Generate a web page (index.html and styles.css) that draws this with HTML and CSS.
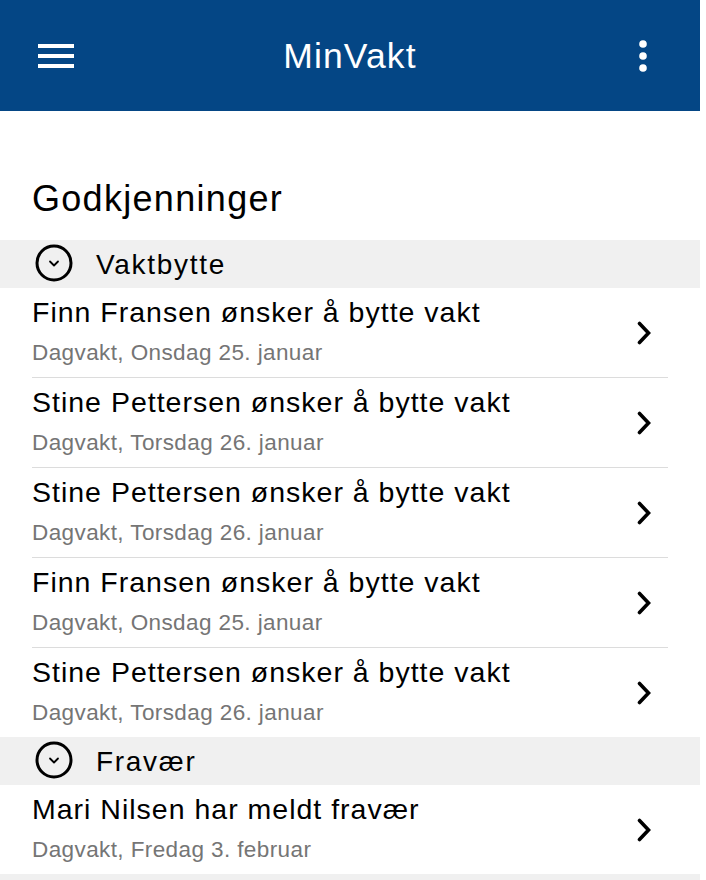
FILE: index.html
```html
<!DOCTYPE html>
<html lang="no">
<head>
<meta charset="utf-8">
<title>MinVakt</title>
<link rel="stylesheet" href="styles.css">
</head>
<body>
<div class="app">
  <header class="topbar">
    <div class="topbar-left">
      <span class="hamburger"><span></span><span></span><span></span></span>
    </div>
    <h1 class="brand">MinVakt</h1>
    <div class="topbar-right">
      <svg class="kebab" width="10" height="32" viewBox="0 0 10 32"><circle cx="5" cy="4" r="3.8" fill="#fff"/><circle cx="5" cy="16" r="3.8" fill="#fff"/><circle cx="5" cy="28" r="3.8" fill="#fff"/></svg>
    </div>
  </header>

  <h2 class="page-title">Godkjenninger</h2>

  <section class="group">
    <div class="group-head">
      <svg class="toggle" width="38" height="38" viewBox="0 0 38 38"><circle cx="19" cy="19" r="17" fill="none" stroke="#000" stroke-width="3"/><polyline points="15,17.5 19,21.5 23,17.5" fill="none" stroke="#000" stroke-width="1.8" stroke-linecap="round" stroke-linejoin="round"/></svg>
      <span class="group-title">Vaktbytte</span>
    </div>
    <ul class="items">
      <li class="item"><div class="item-text"><div class="item-main">Finn Fransen ønsker å bytte vakt</div><div class="item-sub">Dagvakt, Onsdag 25. januar</div></div><svg class="chev" width="14" height="24" viewBox="0 0 14 24"><polyline points="2.5,2.5 11.5,12 2.5,21.5" fill="none" stroke="#000" stroke-width="3.6" stroke-linecap="round" stroke-linejoin="miter"/></svg></li>
      <li class="item"><div class="item-text"><div class="item-main">Stine Pettersen ønsker å bytte vakt</div><div class="item-sub">Dagvakt, Torsdag 26. januar</div></div><svg class="chev" width="14" height="24" viewBox="0 0 14 24"><polyline points="2.5,2.5 11.5,12 2.5,21.5" fill="none" stroke="#000" stroke-width="3.6" stroke-linecap="round" stroke-linejoin="miter"/></svg></li>
      <li class="item"><div class="item-text"><div class="item-main">Stine Pettersen ønsker å bytte vakt</div><div class="item-sub">Dagvakt, Torsdag 26. januar</div></div><svg class="chev" width="14" height="24" viewBox="0 0 14 24"><polyline points="2.5,2.5 11.5,12 2.5,21.5" fill="none" stroke="#000" stroke-width="3.6" stroke-linecap="round" stroke-linejoin="miter"/></svg></li>
      <li class="item"><div class="item-text"><div class="item-main">Finn Fransen ønsker å bytte vakt</div><div class="item-sub">Dagvakt, Onsdag 25. januar</div></div><svg class="chev" width="14" height="24" viewBox="0 0 14 24"><polyline points="2.5,2.5 11.5,12 2.5,21.5" fill="none" stroke="#000" stroke-width="3.6" stroke-linecap="round" stroke-linejoin="miter"/></svg></li>
      <li class="item"><div class="item-text"><div class="item-main">Stine Pettersen ønsker å bytte vakt</div><div class="item-sub">Dagvakt, Torsdag 26. januar</div></div><svg class="chev" width="14" height="24" viewBox="0 0 14 24"><polyline points="2.5,2.5 11.5,12 2.5,21.5" fill="none" stroke="#000" stroke-width="3.6" stroke-linecap="round" stroke-linejoin="miter"/></svg></li>
    </ul>
  </section>

  <section class="group">
    <div class="group-head">
      <svg class="toggle" width="38" height="38" viewBox="0 0 38 38"><circle cx="19" cy="19" r="17" fill="none" stroke="#000" stroke-width="3"/><polyline points="15,17.5 19,21.5 23,17.5" fill="none" stroke="#000" stroke-width="1.8" stroke-linecap="round" stroke-linejoin="round"/></svg>
      <span class="group-title">Fravær</span>
    </div>
    <ul class="items">
      <li class="item"><div class="item-text"><div class="item-main">Mari Nilsen har meldt fravær</div><div class="item-sub">Dagvakt, Fredag 3. februar</div></div><svg class="chev" width="14" height="24" viewBox="0 0 14 24"><polyline points="2.5,2.5 11.5,12 2.5,21.5" fill="none" stroke="#000" stroke-width="3.6" stroke-linecap="round" stroke-linejoin="miter"/></svg></li>
    </ul>
  </section>

  <section class="group">
    <div class="group-head"></div>
  </section>
</div>
</body>
</html>
```

FILE: styles.css
```css
* { box-sizing: border-box; }

html, body {
  margin: 0;
  padding: 0;
  background: #fff;
}

body {
  font-family: "Liberation Sans", Arial, Helvetica, sans-serif;
  color: #000;
}

.app {
  width: 700px;
  background: #fff;
}

.topbar {
  height: 111px;
  background: #044685;
  display: grid;
  grid-template-columns: 1fr auto 1fr;
  align-items: center;
  padding: 0 38px;
}

.topbar-left { display: flex; align-items: center; }
.topbar-right {
  display: flex;
  justify-content: flex-end;
  align-items: center;
  padding-right: 14px;
}

.hamburger {
  display: flex;
  flex-direction: column;
  gap: 6px;
  width: 36px;
}
.hamburger span {
  display: block;
  height: 4px;
  background: #fff;
}

.kebab { display: block; }

.brand {
  margin: 0;
  color: #fff;
  font-weight: normal;
  font-size: 35.5px;
  letter-spacing: 1.1px;
  line-height: 40px;
}

.page-title {
  margin: 0 0 19px;
  padding: 66px 0 0 32px;
  font-weight: normal;
  font-size: 36px;
  line-height: 44px;
  letter-spacing: 1.3px;
}

.group-head {
  height: 48px;
  background: #f0f0f0;
  display: flex;
  align-items: center;
  padding-left: 35px;
  gap: 23px;
}

.toggle { display: block; margin-top: -3px; }

.group-title {
  font-size: 28px;
  letter-spacing: 1.7px;
  line-height: 48px;
  padding-top: 2px;
}

.items {
  list-style: none;
  margin: 0;
  padding: 0;
}

.item {
  margin: 0 32px;
  display: flex;
  align-items: center;
  justify-content: space-between;
  padding: 7px 17px 10px 0;
  border-bottom: 1px solid #dcdcdc;
}
.item:last-child { border-bottom: none; }

.item-main {
  font-size: 28.5px;
  line-height: 34px;
  letter-spacing: 1px;
}

.item-sub {
  margin-top: 10px;
  font-size: 22.5px;
  line-height: 28px;
  letter-spacing: 0.4px;
  color: #757575;
}

.chev { display: block; margin-top: 4px; }
```
